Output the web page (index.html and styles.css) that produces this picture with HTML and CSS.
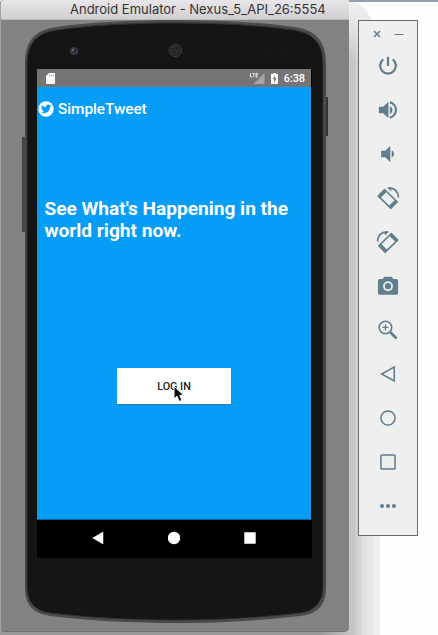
FILE: index.html
```html
<!DOCTYPE html>
<html lang="en">
<head>
<meta charset="utf-8">
<title>Android Emulator</title>
<link rel="stylesheet" href="styles.css">
</head>
<body>
<div class="desktop">
  <div class="shade"></div>
  <main class="window">
    <header class="titlebar">Android Emulator - Nexus_5_API_26:5554</header>
    <div class="stage">
      <svg class="device" viewBox="0 20 349 612" width="349" height="612">
        <path d="M25 137h-3v95h3z" fill="#444"/><path d="M325 97h3v39h-3z" fill="#333"/>
        <path d="M25 64C25 42 34 30 56 27C91 22 135 20 175 20S260 22 294 27C317 30 326 42 326 64V588C326 605 318 614 300 616C257 621 215 623 175 623S93 621 50 616C32 613 25 604 25 588Z" fill="#4b4b4b"/>
        <path d="M27 65C27 44 36 33 57 30C92 25 135 23 175 23S259 25 293 30C314 33 323 44 323 65V587C323 603 314 611 300 613C257 618 215 620 175 620S93 618 50 613C35 611 27 602 27 587Z" fill="#151515" stroke="#303030"/>
        <circle cx="74" cy="51" r="4" fill="#3b3b3f"/><circle cx="74.300" cy="51" r="2" fill="#26264f"/><circle cx="73" cy="50" r=".8" fill="#bbb"/>
        <circle cx="175.500" cy="50.500" r="7" fill="#202020"/>
        <g fill="none" stroke="#626262" stroke-dasharray="1 1.300"><circle cx="175.500" cy="50.500" r="6"/><circle cx="175.500" cy="50.500" r="3.700"/><circle cx="175.500" cy="50.500" r="1.300"/></g>
        <path d="M271 50h1M280 50h1" stroke="#333"/>
      </svg>
      <section class="screen">
        <div class="status">
          <svg class="sd" width="9" height="11" viewBox="0 0 9 11"><path d="M3 0h5q1 0 1 1v9q0 1-1 1H1q-1 0-1-1V3z" fill="#fff"/><path d="M3.500 1.500v2M5.500 1.500v2M7.300 1.500v2" stroke="#999" stroke-width=".8"/></svg>
          <svg class="signal" width="15" height="11" viewBox="0 0 15 11"><path d="M14.500 0v11H3.500z" fill="#a5a5a5"/><path d="M.5 0v4h1.700M2.500.5H5M3.700.5v4M8 .5H6v3.500h2M6 2.200h2" fill="none" stroke="#eee" stroke-width=".9"/></svg>
          <svg class="battery" width="7" height="11" viewBox="0 0 7 11"><path d="M2 0h3v1h2v10H0V1h2z" fill="#fff"/><path d="M4 2.500 1.500 6.200h1.700V9.500L5.700 5.500H4z" fill="#707070"/></svg>
          <span>6:38</span>
        </div>
        <div class="app">
          <div class="appbar">
            <svg width="16" height="16" viewBox="0 0 16 16"><circle cx="8" cy="8" r="7.700" fill="#fff"/><path d="M13 5.200l-1.100.9c.1 3.300-2.300 6.100-5.500 6.100-1.300 0-2.400-.3-3.300-.9 1.200.1 2.100-.2 3-.9-1-.1-1.700-.7-2-1.500h.9c-1-.3-1.700-1.100-1.700-2.200l.9.200c-.8-.7-1-1.800-.5-2.900 1.100 1.300 2.500 2.100 4.300 2.200-.4-2.600 2.300-3.600 3.800-2.100l1.300-.5-.8 1.200z" fill="#069df6"/></svg>
            <span>SimpleTweet</span>
          </div>
          <h1>See What's Happening in the<br>world right now.</h1>
          <button class="login">LOG IN</button>
          <svg class="cursor" width="12" height="18" viewBox="0 0 12 18"><path d="M1 1v13l3-2.700 2.300 5.200 2.700-1.200-2.200-5h4z" fill="#111" stroke="#fff" stroke-width="1"/></svg>
        </div>
        <nav class="softkeys">
          <svg width="12" height="14" viewBox="0 0 12 14"><path d="M11 1v12L.7 7z" fill="#fff" stroke="#fff" stroke-width=".5"/></svg>
          <svg width="12" height="14" viewBox="0 0 12 14"><circle cx="6" cy="7" r="6.200" fill="#fff"/></svg>
          <svg width="12" height="14" viewBox="0 0 12 14"><path d="M.3 1.200h11.400v11.600H.3z" fill="#fff"/></svg>
        </nav>
      </section>
    </div>
  </main>
  <aside class="tools">
    <div class="controls">
      <svg width="8" height="8" viewBox="0 0 8 8"><path d="M1 1l6 6M7 1 1 7"/></svg>
      <svg width="10" height="8" viewBox="0 0 10 8"><path d="M.5 4.500h9" stroke-width="1"/></svg>
    </div>
    <svg class="tool" viewBox="0 0 24 24"><path d="M12 2v10M6.800 4.800a8.600 8.600 0 1 0 10.400 0" stroke-width="2.500"/></svg>
    <svg class="tool" viewBox="0 0 24 24"><path class="solid" d="M2 8.500v7h4.700l5.800 5.500V3l-5.800 5.500zM14 7.500v9q3-1.300 3-4.500t-3-4.500"/><path d="M14 3.700a8.500 8.500 0 0 1 0 16.600" stroke-width="2.400"/></svg>
    <svg class="tool" viewBox="0 0 24 24"><path class="solid" d="M4.500 8.500v7h4.500l5.500 5.500V3L9 8.500zM16 8v8q2.700-1.300 2.700-4T16 8"/></svg>
    <svg class="tool" viewBox="0 0 24 24"><path d="M8.500 3 21.800 16 15 23 1.500 10z"/><path d="M9.300 3.700 2.300 10.700M21 15.200 14.200 22.200" stroke-width="4"/><path d="M12 1.400C18.500 0 23.200 5 23.400 11.500" stroke-width="1.800"/><path class="solid" d="M11 .5h4.500V5z"/></svg>
    <svg class="tool" viewBox="0 0 24 24"><path d="M15.500 3 2.200 16 9 23 22.500 10z"/><path d="M14.700 3.700 21.700 10.700M3 15.200 9.800 22.200" stroke-width="4"/><path d="M12 1.400C5.500 0 .8 5 .6 11.500" stroke-width="1.800"/><path class="solid" d="M13 .5H8.500V5z"/></svg>
    <svg class="tool" viewBox="0 0 24 24"><path class="solid" fill-rule="evenodd" d="M8 2h8l2 2.300h3q2 0 2 2V19.500q0 2-2 2H3q-2 0-2-2V6.300q0-2 2-2h3zM12 6.800a5.400 5.400 0 1 0 0 10.800A5.400 5.400 0 0 0 12 6.800"/><circle class="solid" cx="12" cy="12.200" r="3.400"/></svg>
    <svg class="tool" viewBox="0 0 24 24"><circle cx="9.200" cy="9.200" r="6.800"/><path d="M9.200 6v6.400M6 9.200h6.400" stroke-width="1.500"/><path d="m14.500 14.500 6.800 6.800" stroke-width="2.900"/></svg>
    <svg class="tool" viewBox="0 0 24 24"><path d="M18.800 4.500v15L5 12z" stroke-width="1.700"/></svg>
    <svg class="tool" viewBox="0 0 24 24"><circle cx="12" cy="12" r="7.700" stroke-width="1.700"/></svg>
    <svg class="tool" viewBox="0 0 24 24"><rect x="4.300" y="4.300" width="15.400" height="15.400" rx="1" stroke-width="1.700"/></svg>
    <svg class="tool" viewBox="0 0 24 24"><g class="solid"><circle cx="5.500" cy="12" r="2.200"/><circle cx="12" cy="12" r="2.200"/><circle cx="18.500" cy="12" r="2.200"/></g></svg>
  </aside>
</div>
</body>
</html>
```
FILE: styles.css
```css
* { box-sizing: border-box; }
body { margin: 0; background: #fefefe; font-family: Roboto, "Liberation Sans", sans-serif; }
svg { display: block; flex: none; }
.desktop { position: relative; display: flex; width: 438px; height: 635px; overflow: hidden; background: #fefefe; }
.desktop::before { content: ""; position: absolute; left: 348px; right: 0; top: 0; height: 2px; background: #959caa; }
.shade {
  position: absolute; left: 0; top: 2px; width: 380px; height: 633px;
  border-top-right-radius: 30px 60px;
  background: linear-gradient(90deg, #999 0 320px, #c5c5c5 350px 355px, #cecece 355px 358px, #d6d6d6 358px 362px, #e0e0e2 362px 367px, #e7e7e9 367px 373px, #eeeef0 373px);
}
.shade::after { content: ""; position: absolute; left: 349px; top: 0; width: 31px; height: 60px; background: linear-gradient(#f0f0f1, #e8e8e9 30%, transparent); border-top-right-radius: 30px 60px; }
.window { position: relative; width: 349px; height: 632px; background: #828282; border-left: 1px solid #a2a2a2; border-radius: 3px 0 5px 5px; overflow: hidden; border-bottom: 1px solid #707070; }
.titlebar { height: 20px; padding-left: 69px; background: linear-gradient(#e8e6e8, #d1cfd1); border-bottom: 1px solid #bcbcbc; color: #343434; font: 13px/19px Inter, sans-serif; white-space: nowrap; letter-spacing: 0; }
.stage { position: relative; padding: 49px 0 0 36px; }
.device { position: absolute; left: -1px; top: 0; }
.screen { position: relative; width: 275px; height: 489px; background: #000; }
.status { display: flex; align-items: center; width: 274px; height: 18px; padding: 0 6px 0 9px; background: #757575; color: #fff; font-size: 11px; font-weight: 500; letter-spacing: -.1px; }
.signal { margin-left: auto; margin-right: 6px; }
.battery { margin-right: 6px; }
.app { position: relative; width: 274px; height: 433px; background: #069df6; color: #fff; border-bottom: 1px solid #07609a; }
.appbar { display: flex; align-items: center; gap: 4px; height: 44px; padding-left: 1px; font-size: 15.4px; font-weight: 500; letter-spacing: -.08px; }
.app h1 { margin: 67px 0 0 7.500px; font-size: 19.100px; line-height: 22px; font-weight: 700; white-space: nowrap; }
.login { display: block; width: 114px; height: 36px; margin: 126px 0 0 80px; padding: 0; border: 0; background: #fff; box-shadow: 0 1px 1px #3478a5; color: #222; font: 500 10.8px/38px Roboto, sans-serif; }
.cursor { position: absolute; left: 136px; top: 298px; }
.softkeys { display: flex; gap: 64px; padding: 11px 0 0 55px; }
.tools { position: relative; width: 60px; height: 516px; margin: 20px 0 0 9px; border: 1px solid #6c6c6c; background: #efefef; }
.tools svg { fill: none; stroke: #607f8e; stroke-width: 1.5; }
.tools .solid { fill: #607f8e; stroke: none; }
.controls { display: flex; align-items: center; gap: 13px; height: 23px; padding: 3px 0 0 14px; }
.tools .tool { width: 22px; height: 22px; margin: 0 auto 22px; stroke-width: 1.800; overflow: visible; }
.tools .controls + .tool { margin-top: 11px; }
```
